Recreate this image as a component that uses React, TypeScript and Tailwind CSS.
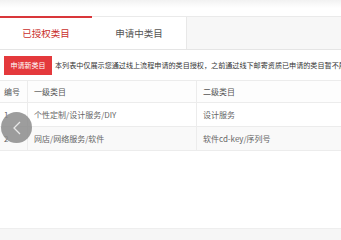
import React from 'react'

const rows = [
  { no: '1', first: '个性定制/设计服务/DIY', second: '设计服务' },
  { no: '2', first: '网店/网络服务/软件', second: '软件cd-key/序列号' },
]

export default function App() {
  return (
    <div
      className="relative w-[341px] h-[240px] overflow-hidden bg-white text-[#666]"
      style={{ fontFamily: '"Noto Sans CJK SC", "Noto Sans", sans-serif' }}
    >
      <div className="h-[8px] bg-gradient-to-b from-[#f2f2f2] to-white" />
      <div className="h-[8px]" />

      {/* tabs */}
      <div className="flex h-[34px] bg-[#f7f7f7] border-t border-[#eaeaea] border-b border-b-[#e5e5e5]">
        <div className="w-[92px] -mt-px border-t-2 border-[#d9363a] bg-white flex items-center justify-center text-[9.5px] text-[#c9302c]">
          已授权类目
        </div>
        <div className="w-[95px] bg-white border-r border-[#e8e8e8] flex items-center justify-center text-[9.5px] text-[#555]">
          申请中类目
        </div>
      </div>

      {/* notice */}
      <div className="flex items-center gap-[3px] px-[4px] mt-[6px] h-[19px] whitespace-nowrap overflow-hidden">
        <div className="w-[48px] h-[19px] shrink-0 bg-[#e4393c] text-white text-[7px] flex items-center justify-center">
          申请新类目
        </div>
        <div className="text-[7.1px] text-[#333]">
          本列表中仅展示您通过线上流程申请的类目授权，之前通过线下邮寄资质已申请的类目暂不展
        </div>
      </div>

      {/* table */}
      <div className="mt-[5px] w-[400px] text-[8px]">
        <div className="flex h-[23px] border-t border-b border-[#ececec] bg-[#fdfdfd] text-[#555]">
          <div className="w-[28px] border-r border-[#ececec] pl-[4px] flex items-center">编号</div>
          <div className="w-[169px] border-r border-[#ececec] pl-[6px] flex items-center">一级类目</div>
          <div className="flex-1 pl-[6px] flex items-center">二级类目</div>
        </div>
        {rows.map((r, i) => (
          <div
            key={r.no}
            className={`flex h-[24px] border-b border-[#ececec] ${i % 2 ? 'bg-[#f9f9f9]' : 'bg-white'}`}
          >
            <div className="w-[28px] border-r border-[#ececec] pl-[4px] flex items-center">{r.no}</div>
            <div className="w-[169px] border-r border-[#ececec] pl-[6px] flex items-center">{r.first}</div>
            <div className="flex-1 pl-[6px] flex items-center">{r.second}</div>
          </div>
        ))}
      </div>

      {/* back button overlay */}
      <div className="absolute left-[1px] top-[112px] w-[31px] h-[31px] rounded-full bg-[#8c8c8c]/85 flex items-center justify-center">
        <svg width="12" height="16" viewBox="0 0 12 16" fill="none">
          <path d="M9 2 L3 8 L9 14" stroke="#e8e8e8" strokeWidth="1.3" />
        </svg>
      </div>

      {/* bottom bar */}
      <div className="absolute left-0 right-0 bottom-0 h-[12px] bg-[#f6f6f6] border-t border-[#eeeeee]" />
    </div>
  )
}
